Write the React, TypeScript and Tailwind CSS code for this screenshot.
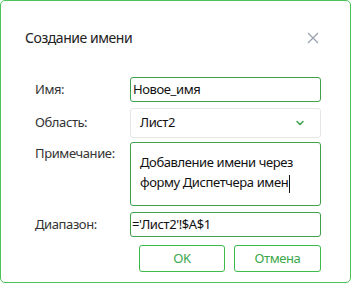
import { ChevronDown } from 'lucide-react';

const font = { fontFamily: '"Noto Sans", "Open Sans", sans-serif' };

export default function App() {
  return (
    <div className="w-[352px] h-[284px] bg-white" style={font}>
      <div className="w-[351px] h-[283px] border border-[#4cc35a] rounded-[5px] bg-white flex flex-col">
        {/* title */}
        <div className="flex items-center justify-between pl-[24px] pr-[31px] pt-[26px] h-[48px]">
          <span className="text-[14px] leading-[20px] text-[#222] tracking-[-0.45px]">Создание имени</span>
          <svg width="12" height="12" viewBox="0 0 12 12" className="text-[#9aa3b0]">
            <path d="M1 1L11 11M11 1L1 11" stroke="currentColor" strokeWidth="1.3" />
          </svg>
        </div>

        <div className="flex flex-col pl-[34px] pr-[29px] mt-[28px] text-[13px] text-[#333] tracking-[-0.4px]">
          {/* name */}
          <div className="flex items-center h-[25px]">
            <span className="w-[95px]">Имя:</span>
            <div className="flex-1 h-full border border-[#3fa14c] rounded-[3px] flex items-center px-[2px] text-[#111]">
              Новое_имя
            </div>
          </div>

          {/* scope */}
          <div className="flex items-center h-[30px] mt-[6px]">
            <span className="w-[95px]">Область:</span>
            <div className="flex-1 h-full border border-[#e6e6e6] rounded-[3px] flex items-center justify-between pl-[9px] pr-[14px] text-[#111]">
              <span>Лист2</span>
              <ChevronDown className="w-[12px] h-[12px] text-[#3fa14c]" strokeWidth={3} />
            </div>
          </div>

          {/* comment */}
          <div className="flex h-[64px] mt-[4px]">
            <span className="w-[95px] pt-[2px]">Примечание:</span>
            <div className="flex-1 h-full border border-[#3fa14c] rounded-[3px] pl-[9px] pt-[9px] leading-[20px] text-[#111]">
              Добавление имени через
              <br />
              форму Диспетчера имен<span className="inline-block w-px h-[18px] bg-[#111] align-middle ml-px" />
            </div>
          </div>

          {/* range */}
          <div className="flex items-center h-[25px] mt-[6px]">
            <span className="w-[95px]">Диапазон:</span>
            <div className="flex-1 h-full border border-[#3fa14c] rounded-[3px] flex items-center px-[1px] text-[#111]">
              ='Лист2'!$A$1
            </div>
          </div>

          {/* buttons */}
          <div className="flex justify-end gap-[9px] mt-[8px]">
            <button className="w-[86px] h-[27px] border border-[#3cba4a] rounded-[3px] text-[#3ba84a] text-[13px]">
              OK
            </button>
            <button className="w-[87px] h-[27px] border border-[#3cba4a] rounded-[3px] text-[#3ba84a] text-[13px]">
              Отмена
            </button>
          </div>
        </div>
      </div>
    </div>
  );
}
